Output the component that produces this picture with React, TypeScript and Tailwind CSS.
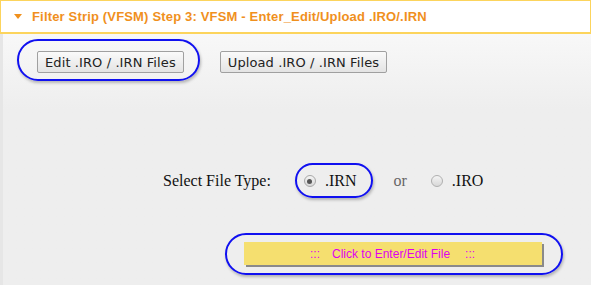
import React from "react";

export default function App() {
  return (
    <div className="relative w-[591px] h-[285px] overflow-hidden bg-white">
      <div className="flex items-center h-[34px] border border-[#fcd45c] border-b-2 pl-[13px] gap-[10px]">
        <svg width="8" height="6" viewBox="0 0 8 6" className="mt-[1px]">
          <path d="M0 0 L8 0 L4 5 Z" fill="#f0901d" />
        </svg>
        <span className="text-[13px] font-bold text-[#f0901d] leading-none tracking-[0.17px]" style={{ fontFamily: '"Liberation Sans", sans-serif' }}>
          Filter Strip (VFSM) Step 3: VFSM - Enter_Edit/Upload .IRO/.IRN
        </span>
      </div>
      <div className="h-[251px] border-l-[3px] border-[#e6e6e6] bg-gradient-to-b from-[#f8f8f8] to-[#eeeeee] to-[30%] flex flex-col">
        <div className="flex pt-[17px] pl-[34px] gap-[36px]">
          <button className="h-[22px] px-[7px] border border-[#a0a0a0] bg-gradient-to-b from-[#fafafa] to-[#e4e4e4] text-[13px] text-[#222] leading-none rounded-[2px] tracking-[0.1px]" style={{ fontFamily: '"DejaVu Sans", sans-serif' }}>
            Edit .IRO / .IRN Files
          </button>
          <button className="h-[22px] px-[7px] border border-[#a0a0a0] bg-gradient-to-b from-[#fafafa] to-[#e4e4e4] text-[13px] text-[#222] leading-none rounded-[2px] tracking-[0.1px]" style={{ fontFamily: '"DejaVu Sans", sans-serif' }}>
            Upload .IRO / .IRN Files
          </button>
        </div>
        <div className="flex items-center mt-[96px] pl-[160px] text-[16px] text-[#111]" style={{ fontFamily: '"Liberation Serif", serif' }}>
          <span>Select File Type:</span>
          <span className="ml-[33px] w-[12px] h-[12px] rounded-full border border-[#a8a8a8] bg-gradient-to-b from-[#f4f4f4] to-[#d8d8d8] flex items-center justify-center">
            <span className="w-[5px] h-[5px] rounded-full bg-[#555]" />
          </span>
          <span className="ml-[9px]">.IRN</span>
          <span className="ml-[37px] text-[#666]">or</span>
          <span className="ml-[24px] w-[12px] h-[12px] rounded-full border border-[#b0b0b0] bg-gradient-to-b from-[#f4f4f4] to-[#d8d8d8]" />
          <span className="ml-[9px]">.IRO</span>
        </div>
        <div className="mt-[49px] pl-[241px]">
          <div className="w-[298px] h-[23px] bg-[#f5df6f] shadow-[2px_2px_0_#8a8a8a] flex items-center pl-[66px] text-[12px] text-[#e000f0]" style={{ fontFamily: '"Liberation Sans", sans-serif' }}>
            <span>:::</span>
            <span className="ml-[12px]">Click to Enter/Edit File</span>
            <span className="ml-[15px]">:::</span>
          </div>
        </div>
      </div>
      <div className="absolute left-[17px] top-[39px] w-[183px] h-[42px] rounded-full border-2 border-[#1010f0] shadow-[1px_2px_3px_rgba(0,0,0,0.25)]" />
      <div className="absolute left-[295px] top-[163px] w-[78px] h-[35px] rounded-full border-2 border-[#1010f0] shadow-[1px_2px_3px_rgba(0,0,0,0.25)]" />
      <div className="absolute left-[225px] top-[233px] w-[338px] h-[42px] rounded-full border-2 border-[#1010f0] shadow-[1px_2px_3px_rgba(0,0,0,0.25)]" />
    </div>
  );
}
